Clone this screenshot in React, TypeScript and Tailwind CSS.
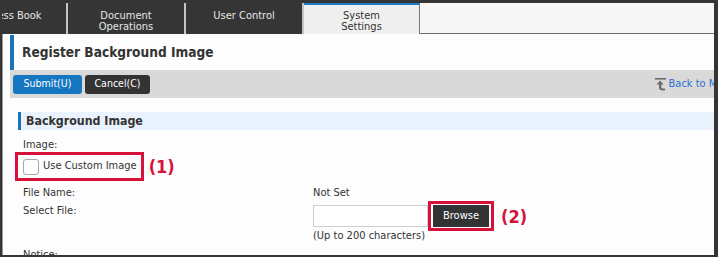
import React from 'react'

const font = { fontFamily: '"DejaVu Sans Condensed", "DejaVu Sans", sans-serif' }

function BackIcon() {
    return (
        <svg width="11" height="13" viewBox="0 0 11 13" className="shrink-0">
            <rect x="0" y="0" width="11" height="1.6" fill="#6b6b6b" />
            <path d="M5 2.5 L1.5 6.5 H4 V9.5 C4 11.5 5.5 12.5 8 12.5 H10 V10.5 H8 C6.8 10.5 6.3 10 6.3 9.2 V6.5 H8.6 Z" fill="#6b6b6b" />
        </svg>
    )
}

export default function App() {
    return (
        <div className="w-[718px] h-[260px] bg-white overflow-hidden text-[11px] text-[#333]" style={font}>
            <div className="h-[257px] border-t-[3px] border-l-2 border-r-4 border-b-2 border-[#353535] flex flex-col overflow-hidden">
                {/* Tabs */}
                <div className="h-[31px] flex shrink-0 bg-[#353535]">
                    <div className="w-[116px] ml-[-52px] shrink-0 text-center leading-[11px] pt-[7px] text-[#e6e6e6]">Address Book</div>
                    <div className="w-[2px] bg-[#c4c4c4] shrink-0"></div>
                    <div className="w-[116px] shrink-0 text-center leading-[11px] pt-[7px] text-[#e6e6e6]">Document<br />Operations</div>
                    <div className="w-[2px] bg-[#c4c4c4] shrink-0"></div>
                    <div className="w-[116px] shrink-0 text-center leading-[11px] pt-[7px] text-[#e6e6e6]">User Control</div>
                    <div className="w-[2px] bg-[#c4c4c4] shrink-0"></div>
                    <div className="w-[116px] shrink-0 text-center leading-[11px] pt-[5px] bg-[#efefef] border-t-2 border-[#1c7bc6] border-r border-r-[#777]">System<br />Settings</div>
                    <div className="flex-1 bg-[#f7f7f7] border-b border-[#6a6a6a]"></div>
                </div>

                {/* Content */}
                <div className="flex-1 flex flex-col bg-[#fdfdfd] border-l border-[#9a9a9a] pl-[7px] overflow-hidden">
                    <div className="h-[35px] mt-[1px] flex items-center border-l-4 border-[#1a72b8] pl-[8px] shrink-0">
                        <h1 className="text-[13.6px] font-bold text-[#333]">Register Background Image</h1>
                    </div>

                    <div className="h-[28px] bg-[#d9d9d9] flex items-center pl-[3px] gap-[3px] shrink-0">
                        <button className="w-[69px] h-[19px] rounded-[3px] bg-[#1577c1] text-white text-[10.5px]">Submit(U)</button>
                        <button className="w-[65px] h-[19px] rounded-[3px] bg-[#333] text-white text-[10.5px]">Cancel(C)</button>
                        <div className="flex-1"></div>
                        <div className="flex items-center gap-[3px] mr-[-22px] whitespace-nowrap text-[#2d70d2]">
                            <BackIcon />
                            <span>Back to Menu</span>
                        </div>
                    </div>

                    <div className="mt-[14px] h-[18px] ml-[8px] bg-[#eaf2fd] border-l-[3px] border-[#1a72b8] pl-[5px] flex items-center shrink-0">
                        <h2 className="text-[12.3px] font-bold text-[#333]">Background Image</h2>
                    </div>

                    <div className="ml-[13px] mt-[8px] leading-[14px]">Image:</div>

                    <div className="flex items-center ml-[5px] h-[29px] shrink-0">
                        <label className="h-[29px] flex items-center gap-[4px] border-[3px] border-[#d6123b] pl-[5px] pr-[4px]">
                            <span className="w-[16px] h-[16px] rounded-[3px] border border-[#a8a8a8] bg-white"></span>
                            <span>Use Custom Image</span>
                        </label>
                        <span className="ml-[5px] text-[18px] font-bold text-[#d6123b]">(1)</span>
                    </div>

                    <div className="ml-[13px] mt-[5px] flex leading-[14px]">
                        <div className="w-[290px] shrink-0">File Name:</div>
                        <div>Not Set</div>
                    </div>

                    <div className="ml-[13px] mt-[1px] flex">
                        <div className="w-[290px] shrink-0 mt-[3px] leading-[14px]">Select File:</div>
                        <div className="flex flex-col">
                            <div className="h-[30px] flex items-center">
                                <div className="w-[115px] h-[22px] border border-[#cfcfcf] bg-white"></div>
                                <div className="border-[3px] border-[#d6123b] px-[2px] py-[1px]">
                                    <button className="w-[56px] h-[22px] bg-[#333] text-white text-[11px]">Browse</button>
                                </div>
                                <span className="ml-[7px] text-[18px] font-bold text-[#d6123b]">(2)</span>
                            </div>
                            <div className="-mt-[2px] leading-[14px]">(Up to 200 characters)</div>
                        </div>
                    </div>

                    <div className="ml-[13px] mt-[5px] leading-[14px]">Notice:</div>
                </div>
            </div>
        </div>
    )
}
